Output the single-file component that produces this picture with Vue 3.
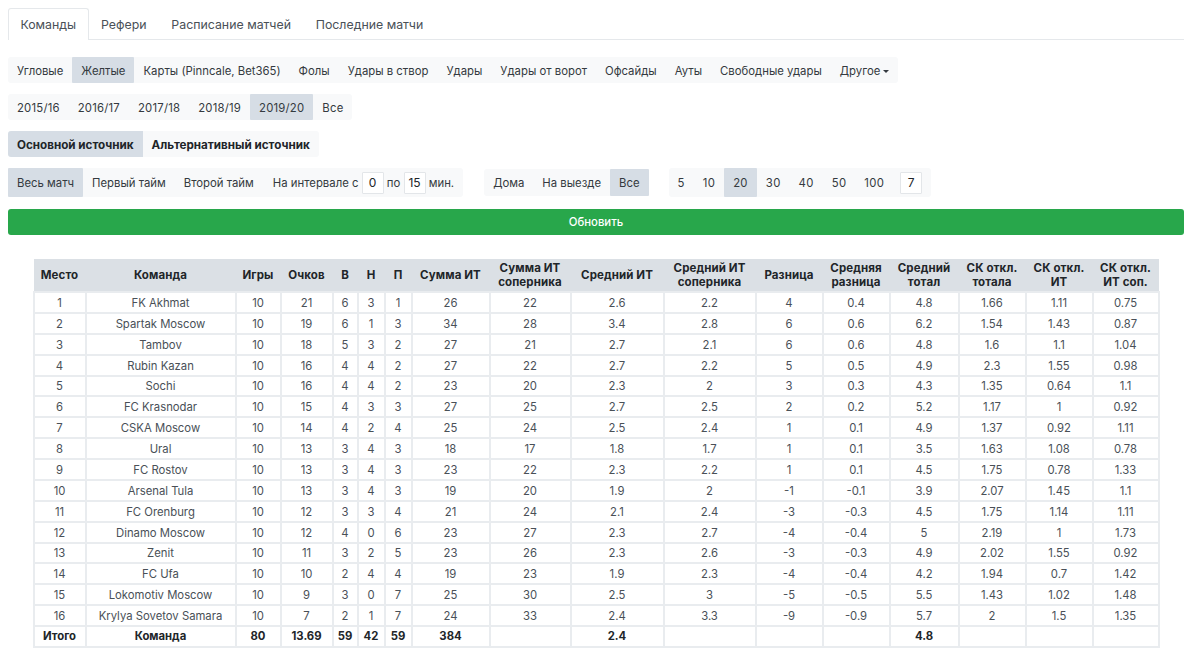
<template>
  <div class="page">
    <ul class="tabs">
      <li v-for="(tab, i) in tabs" :key="tab" :class="['tab', { active: i === 0 }]">{{ tab }}</li>
    </ul>

    <div class="pills stats">
      <span v-for="s in stats" :key="s" :class="['pill', { active: s === 'Желтые' }]">{{ s }}</span>
      <span class="pill">Другое<i class="caret"></i></span>
    </div>

    <div class="pills seasons">
      <span v-for="s in seasons" :key="s" :class="['pill', { active: s === '2019/20' }]">{{ s }}</span>
    </div>

    <div class="pills sources">
      <span class="pill active">Основной источник</span>
      <span class="pill">Альтернативный источник</span>
    </div>

    <div class="filters">
      <div class="pills tall">
        <span class="pill active">Весь матч</span>
        <span class="pill">Первый тайм</span>
        <span class="pill">Второй тайм</span>
        <span class="pill interval">На интервале с <b class="box">0</b> по <b class="box">15</b> мин.</span>
      </div>
      <div class="pills tall place">
        <span class="pill">Дома</span>
        <span class="pill">На выезде</span>
        <span class="pill active">Все</span>
      </div>
      <div class="pills tall limit">
        <span v-for="n in limits" :key="n" :class="['pill', { active: n === 20 }]">{{ n }}</span>
        <b class="box seven">7</b>
      </div>
    </div>

    <button class="refresh">Обновить</button>

    <table class="stats-table">
      <colgroup>
        <col v-for="(w, i) in widths" :key="i" :style="{ width: w + 'px' }" />
      </colgroup>
      <thead>
        <tr>
          <th v-for="h in headers" :key="h" v-html="h"></th>
        </tr>
      </thead>
      <tbody>
        <tr v-for="row in rows" :key="row[0]">
          <td v-for="(c, i) in row" :key="i">{{ c }}</td>
        </tr>
      </tbody>
      <tfoot>
        <tr>
          <td v-for="(c, i) in totals" :key="i">{{ c }}</td>
        </tr>
      </tfoot>
    </table>
  </div>
</template>

<script setup>
const tabs = ['Команды', 'Рефери', 'Расписание матчей', 'Последние матчи']
const stats = ['Угловые', 'Желтые', 'Карты (Pinncale, Bet365)', 'Фолы', 'Удары в створ', 'Удары', 'Удары от ворот', 'Офсайды', 'Ауты', 'Свободные удары']
const seasons = ['2015/16', '2016/17', '2017/18', '2018/19', '2019/20', 'Все']
const limits = [5, 10, 20, 30, 40, 50, 100]

const widths = [52, 150, 45, 52, 25, 27, 27, 78, 81, 93, 92, 67, 67, 69, 67, 67, 66]
const headers = ['Место', 'Команда', 'Игры', 'Очков', 'В', 'Н', 'П', 'Сумма ИТ', 'Сумма ИТ<br>соперника', 'Средний ИТ', 'Средний ИТ<br>соперника', 'Разница', 'Средняя<br>разница', 'Средний<br>тотал', 'СК откл.<br>тотала', 'СК откл.<br>ИТ', 'СК откл.<br>ИТ соп.']

const rows = [
  [1, 'FK Akhmat', 10, 21, 6, 3, 1, 26, 22, 2.6, 2.2, 4, 0.4, 4.8, 1.66, 1.11, 0.75],
  [2, 'Spartak Moscow', 10, 19, 6, 1, 3, 34, 28, 3.4, 2.8, 6, 0.6, 6.2, 1.54, 1.43, 0.87],
  [3, 'Tambov', 10, 18, 5, 3, 2, 27, 21, 2.7, 2.1, 6, 0.6, 4.8, 1.6, 1.1, 1.04],
  [4, 'Rubin Kazan', 10, 16, 4, 4, 2, 27, 22, 2.7, 2.2, 5, 0.5, 4.9, 2.3, 1.55, 0.98],
  [5, 'Sochi', 10, 16, 4, 4, 2, 23, 20, 2.3, 2, 3, 0.3, 4.3, 1.35, 0.64, 1.1],
  [6, 'FC Krasnodar', 10, 15, 4, 3, 3, 27, 25, 2.7, 2.5, 2, 0.2, 5.2, 1.17, 1, 0.92],
  [7, 'CSKA Moscow', 10, 14, 4, 2, 4, 25, 24, 2.5, 2.4, 1, 0.1, 4.9, 1.37, 0.92, 1.11],
  [8, 'Ural', 10, 13, 3, 4, 3, 18, 17, 1.8, 1.7, 1, 0.1, 3.5, 1.63, 1.08, 0.78],
  [9, 'FC Rostov', 10, 13, 3, 4, 3, 23, 22, 2.3, 2.2, 1, 0.1, 4.5, 1.75, 0.78, 1.33],
  [10, 'Arsenal Tula', 10, 13, 3, 4, 3, 19, 20, 1.9, 2, -1, -0.1, 3.9, 2.07, 1.45, 1.1],
  [11, 'FC Orenburg', 10, 12, 3, 3, 4, 21, 24, 2.1, 2.4, -3, -0.3, 4.5, 1.75, 1.14, 1.11],
  [12, 'Dinamo Moscow', 10, 12, 4, 0, 6, 23, 27, 2.3, 2.7, -4, -0.4, 5, 2.19, 1, 1.73],
  [13, 'Zenit', 10, 11, 3, 2, 5, 23, 26, 2.3, 2.6, -3, -0.3, 4.9, 2.02, 1.55, 0.92],
  [14, 'FC Ufa', 10, 10, 2, 4, 4, 19, 23, 1.9, 2.3, -4, -0.4, 4.2, 1.94, 0.7, 1.42],
  [15, 'Lokomotiv Moscow', 10, 9, 3, 0, 7, 25, 30, 2.5, 3, -5, -0.5, 5.5, 1.43, 1.02, 1.48],
  [16, 'Krylya Sovetov Samara', 10, 7, 2, 1, 7, 24, 33, 2.4, 3.3, -9, -0.9, 5.7, 2, 1.5, 1.35]
]
const totals = ['Итого', 'Команда', 80, 13.69, 59, 42, 59, 384, '', 2.4, '', '', '', 4.8, '', '', '']
</script>

<style scoped>
.page {
  padding: 8px 16px 0 8px;
  font-family: Inter, "Liberation Sans", sans-serif;
  font-size: 11.35px;
  color: #212529;
}

.tabs {
  display: flex;
  list-style: none;
  margin: 0 0 17px;
  padding: 0;
  height: 32px;
  border-bottom: 1px solid #e5e8eb;
  box-sizing: border-box;
}

.tab {
  padding: 0 11.4px;
  font-size: 12.35px;
  line-height: 31px;
  color: #495057;
  border: 1px solid transparent;
  border-bottom: none;
  border-radius: 3px 3px 0 0;
  height: 32px;
  box-sizing: border-box;
}

.tab.active {
  background: #fff;
  border-color: #e5e8eb;
}

.pills {
  display: flex;
  width: fit-content;
  background: #f8f9fa;
  border-radius: 3px;
  height: 26px;
  margin-bottom: 11px;
}

.pill {
  display: flex;
  align-items: center;
  padding: 2px 9px 0;
  color: #343a40;
  white-space: pre;
}

.pill.active {
  background: #d6dde5;
  border-radius: 1px;
}

.seasons .pill {
  letter-spacing: 0.2px;
}

.sources .pill {
  font-size: 11.65px;
  font-weight: 700;
  color: #212529;
}

.sources .pill.active {
  border-radius: 3px 0 0 3px;
}

.caret {
  display: inline-block;
  margin-left: 3px;
  border-top: 3px solid #343a40;
  border-left: 3px solid transparent;
  border-right: 3px solid transparent;
}

.filters {
  display: flex;
  margin-bottom: 12px;
}

.tall {
  height: 29px;
  margin: 0;
}

.tall .pill {
  padding-top: 0;
  height: 100%;
}

.interval {
  margin-left: 1px;
}

.place {
  margin-left: 21px;
  height: 27px;
  margin-top: 1px;
}

.limit {
  margin-left: 20px;
  padding-right: 9px;
  align-items: center;
}

.limit .pill {
  letter-spacing: 0.3px;
}

.box {
  display: inline-flex;
  align-items: center;
  justify-content: center;
  width: 22px;
  height: 22px;
  box-sizing: border-box;
  background: #fff;
  border: 1px solid #e3e6e9;
  border-radius: 1px;
  font-size: 12px;
  font-weight: 400;
  color: #212529;
}

.seven {
  margin-left: 7px;
}

.refresh {
  display: block;
  width: 100%;
  height: 26px;
  padding: 0;
  border: none;
  border-radius: 3px;
  background: #28a74b;
  color: #fff;
  font: 500 11.35px Inter, "Liberation Sans", sans-serif;
}

.stats-table {
  table-layout: fixed;
  width: 1125px;
  margin: 24px 0 0 24.5px;
  border-collapse: collapse;
  text-align: center;
}

.stats-table th {
  height: 32px;
  padding: 0 2px;
  background: #dbe0e5;
  font-size: 11.5px;
  font-weight: 700;
  line-height: 14px;
  border: none;
  vertical-align: middle;
  letter-spacing: 0.1px;
}

.stats-table td {
  height: 20.875px;
  padding: 1px 0 0;
  border: 2px solid #e9ecef;
  font-size: 11.3px;
  color: #495057;
  white-space: nowrap;
  box-sizing: border-box;
}

.stats-table tfoot td {
  height: 20.5px;
  padding-top: 0;
  font-weight: 700;
  color: #212529;
}
</style>
